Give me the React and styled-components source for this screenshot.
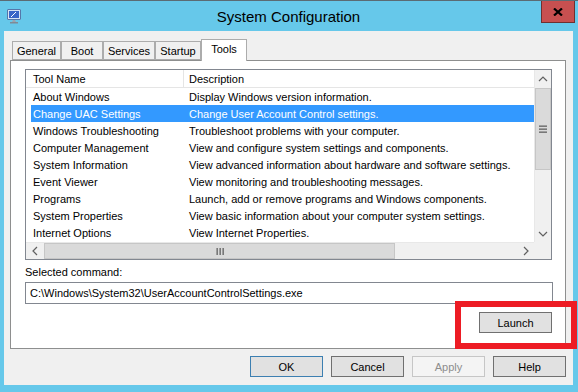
import React from 'react'
import styled, { createGlobalStyle } from 'styled-components'

const GlobalStyle = createGlobalStyle`
  html, body {
    margin: 0;
    padding: 0;
    background: #66c8ea;
  }
  * {
    box-sizing: border-box;
  }
`

const uiFont = `"Liberation Sans", Arial, sans-serif`

const tools = [
  ['About Windows', 'Display Windows version information.'],
  ['Change UAC Settings', 'Change User Account Control settings.'],
  ['Windows Troubleshooting', 'Troubleshoot problems with your computer.'],
  ['Computer Management', 'View and configure system settings and components.'],
  ['System Information', 'View advanced information about hardware and software settings.'],
  ['Event Viewer', 'View monitoring and troubleshooting messages.'],
  ['Programs', 'Launch, add or remove programs and Windows components.'],
  ['System Properties', 'View basic information about your computer system settings.'],
  ['Internet Options', 'View Internet Properties.'],
]

const tabs = [
  { label: 'General', width: 49 },
  { label: 'Boot', width: 42 },
  { label: 'Services', width: 52 },
  { label: 'Startup', width: 46 },
  { label: 'Tools', width: 46, active: true },
]

const Frame = styled.div`
  position: relative;
  width: 578px;
  height: 392px;
  background: #66c8ea;
  border-top: 1px solid #5b6b73;
  padding: 0 5px 7px 4px;
  display: flex;
  flex-direction: column;
  font-family: ${uiFont};
  font-size: 11px;
  color: #000;
`

const TitleBar = styled.div`
  height: 30px;
  display: grid;
  grid-template-columns: 1fr auto 1fr;
  align-items: start;
`

const AppIcon = styled.svg`
  margin: 8px 0 0 3px;
  display: block;
`

const Title = styled.div`
  padding-top: 7px;
  font-size: 15px;
  line-height: 17px;
  color: #000;
`

const CloseButton = styled.div`
  justify-self: end;
  margin-right: -2px;
  width: 34px;
  height: 22px;
  background: #c75050;
  border: 1px solid #6e3030;
  border-top: none;
  display: flex;
  align-items: center;
  justify-content: center;
`

const Client = styled.div`
  flex: 1;
  background: #f0f0f0;
  padding: 8px 7px 8px 6px;
  display: flex;
  flex-direction: column;
`

const TabStrip = styled.div`
  height: 22px;
  display: flex;
  align-items: flex-end;
  padding-left: 2px;
  position: relative;
  z-index: 1;
  margin-bottom: -1px;
`

const Tab = styled.div`
  width: ${p => p.$w}px;
  height: ${p => (p.$active ? 22 : 19)}px;
  margin-bottom: ${p => (p.$active ? 0 : 1)}px;
  background: ${p => (p.$active ? '#fff' : '#f0f0f0')};
  border: 1px solid #acacac;
  border-bottom: ${p => (p.$active ? 'none' : '1px solid #acacac')};
  display: flex;
  align-items: ${p => (p.$active ? 'flex-start' : 'center')};
  justify-content: center;
  padding-top: ${p => (p.$active ? 3 : 0)}px;
  white-space: nowrap;
`

const Panel = styled.div`
  height: 289px;
  background: #fff;
  border: 1px solid #8e8f8f;
  padding: 8px 13px 0 14px;
  display: flex;
  flex-direction: column;
`

const ListBox = styled.div`
  height: 191px;
  border: 1px solid #828790;
  display: grid;
  grid-template-columns: 1fr 17px;
  grid-template-rows: 1fr 17px;
`

const ListContent = styled.div`
  overflow: hidden;
  padding-left: 5px;
`

const Row = styled.div`
  height: ${p => (p.$header ? 18 : 17)}px;
  display: grid;
  grid-template-columns: 153px 1fr;
  align-items: center;
  white-space: nowrap;
  background: ${p => (p.$selected ? '#3399ff' : 'transparent')};
  color: ${p => (p.$selected ? '#fff' : '#000')};
  border-bottom: ${p => (p.$header ? '1px solid #e5e5e5' : 'none')};
  margin-left: ${p => (p.$header ? -5 : 0)}px;
  padding-left: ${p => (p.$header ? 5 : 0)}px;
`

const Cell = styled.div`
  height: 100%;
  display: flex;
  align-items: center;
  padding-left: ${p => (p.$first ? 2 : 5)}px;
  border-right: ${p => (p.$divider ? '1px solid #e5e5e5' : 'none')};
`

const VScroll = styled.div`
  background: #f0f0f0;
  border-left: 1px solid #e8e8e8;
  display: flex;
  flex-direction: column;
`

const HScroll = styled.div`
  background: #f0f0f0;
  border-top: 1px solid #e8e8e8;
  display: flex;
`

const ScrollButton = styled.div`
  width: ${p => (p.$h ? 17 : 16)}px;
  height: ${p => (p.$h ? 16 : 17)}px;
  flex-shrink: 0;
  display: flex;
  align-items: center;
  justify-content: center;
`

const Track = styled.div`
  flex: 1;
  display: flex;
  flex-direction: ${p => (p.$h ? 'row' : 'column')};
`

const Thumb = styled.div`
  ${p => (p.$h ? `width: ${p.$size}px; height: 100%;` : `height: ${p.$size}px; width: 100%;`)}
  background: #dadada;
  border: 1px solid #c6c6c6;
  margin: ${p => (p.$h ? '0 0 0 1px' : '1px 0 0 0')};
  display: flex;
  align-items: center;
  justify-content: center;
`

const Corner = styled.div`
  background: #f0f0f0;
`

const Label = styled.div`
  margin-top: 4px;
  height: 16px;
  line-height: 16px;
`

const TextBox = styled.div`
  margin-top: 2px;
  margin-right: -1px;
  height: 22px;
  border: 1px solid #828790;
  padding-left: 4px;
  display: flex;
  align-items: center;
  white-space: nowrap;
`

const LaunchRow = styled.div`
  margin-top: 8px;
  display: flex;
  justify-content: flex-end;
`

const Button = styled.div`
  width: 73px;
  height: 21px;
  background: ${p => (p.$disabled ? '#f4f4f4' : '#e1e1e1')};
  border: 1px solid ${p => (p.$default ? '#3c7fb1' : p.$disabled ? '#c6c6c6' : '#707070')};
  color: ${p => (p.$disabled ? '#8d8d8d' : '#000')};
  display: flex;
  align-items: center;
  justify-content: center;
`

const ButtonRow = styled.div`
  margin-top: 7px;
  display: flex;
  justify-content: flex-end;
  gap: 8px;
`

const Highlight = styled.div`
  position: absolute;
  left: 455px;
  top: 300px;
  width: 122px;
  height: 48px;
  border: 6px solid #ed1c24;
  pointer-events: none;
`

const Chevron = ({ dir }) => {
  const pts = {
    up: '1,6 5,2 9,6',
    down: '1,2 5,6 9,2',
    left: '6,1 2,5 6,9',
    right: '2,1 6,5 2,9',
  }[dir]
  const vertical = dir === 'up' || dir === 'down'
  return (
    <svg width={vertical ? 10 : 8} height={vertical ? 8 : 10} viewBox={vertical ? '0 0 10 8' : '0 0 8 10'}>
      <polyline points={pts} fill="none" stroke="#606060" strokeWidth="1.2" />
    </svg>
  )
}

const Grip = ({ h }) => (
  <svg width="8" height="8" viewBox="0 0 8 8">
    {h
      ? [1, 4, 7].map(x => <rect key={x} x={x - 0.5} y="1" width="1.3" height="7" fill="#606060" />)
      : [1, 4, 7].map(y => <rect key={y} x="0" y={y - 0.5} width="8" height="1.3" fill="#606060" />)}
  </svg>
)

export default function App() {
  return (
    <>
      <GlobalStyle />
      <Frame>
        <TitleBar>
          <AppIcon width="15" height="15" viewBox="0 0 15 15">
            <rect x="0.5" y="0.5" width="13" height="10" rx="0.5" fill="#d8e4f4" stroke="#5577aa" />
            <rect x="2" y="2" width="10" height="7" fill="#3a66c8" />
            <path d="M4 8 L9 3" stroke="#ffffff" strokeWidth="1" />
            <path d="M6 11 L8 11 L9 13 L5 13 Z" fill="#9aa4b0" />
            <rect x="3" y="13" width="8" height="1.5" fill="#7f8a96" />
          </AppIcon>
          <Title>System Configuration</Title>
          <CloseButton>
            <svg width="10" height="8" viewBox="0 0 10 8">
              <path d="M1 0.5 L9 7.5 M9 0.5 L1 7.5" stroke="#000" strokeWidth="2.2" />
            </svg>
          </CloseButton>
        </TitleBar>
        <Client>
          <TabStrip>
            {tabs.map(t => (
              <Tab key={t.label} $w={t.width} $active={t.active}>
                {t.label}
              </Tab>
            ))}
          </TabStrip>
          <Panel>
            <ListBox>
              <ListContent>
                <Row $header>
                  <Cell $first $divider>Tool Name</Cell>
                  <Cell>Description</Cell>
                </Row>
                {tools.map(([name, desc], i) => (
                  <Row key={name} $selected={i === 1}>
                    <Cell $first>{name}</Cell>
                    <Cell>{desc}</Cell>
                  </Row>
                ))}
              </ListContent>
              <VScroll>
                <ScrollButton>
                  <Chevron dir="up" />
                </ScrollButton>
                <Track>
                  <Thumb $size={82}>
                    <Grip />
                  </Thumb>
                </Track>
                <ScrollButton>
                  <Chevron dir="down" />
                </ScrollButton>
              </VScroll>
              <HScroll>
                <ScrollButton $h>
                  <Chevron dir="left" />
                </ScrollButton>
                <Track $h>
                  <Thumb $h $size={351}>
                    <Grip h />
                  </Thumb>
                </Track>
                <ScrollButton $h>
                  <Chevron dir="right" />
                </ScrollButton>
              </HScroll>
              <Corner />
            </ListBox>
            <Label>Selected command:</Label>
            <TextBox>C:\Windows\System32\UserAccountControlSettings.exe</TextBox>
            <LaunchRow>
              <Button>Launch</Button>
            </LaunchRow>
          </Panel>
          <ButtonRow>
            <Button $default>OK</Button>
            <Button>Cancel</Button>
            <Button $disabled>Apply</Button>
            <Button>Help</Button>
          </ButtonRow>
        </Client>
        <Highlight />
      </Frame>
    </>
  )
}
